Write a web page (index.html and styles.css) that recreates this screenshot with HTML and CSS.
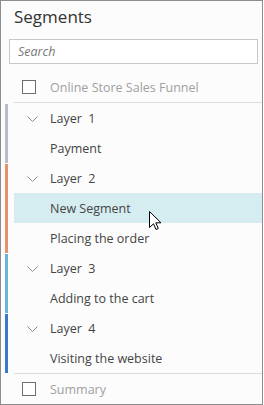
FILE: index.html
```html
<!DOCTYPE html>
<html lang="en">

<head>
    <meta charset="UTF-8">
    <meta name="viewport" content="width=device-width, initial-scale=1.0">
    <title>Segments</title>
    <link rel="stylesheet" href="styles.css">
</head>

<body>

    <div class="panel">
        <h1 class="title">Segments</h1>

        <div class="search">
            <input type="text" placeholder="Search">
        </div>

        <div class="row top-row">
            <span class="checkbox"></span>
            <span class="muted">Online Store Sales Funnel</span>
        </div>

        <div class="layer layer-1">
            <div class="row">
                <svg class="chevron" width="11" height="6" viewBox="0 0 11 6"><polyline points="0.5,0.5 5.5,5.5 10.5,0.5"/></svg>
                <span>Layer&nbsp; 1</span>
            </div>
            <div class="row item">Payment</div>
        </div>

        <div class="layer layer-2">
            <div class="row">
                <svg class="chevron" width="11" height="6" viewBox="0 0 11 6"><polyline points="0.5,0.5 5.5,5.5 10.5,0.5"/></svg>
                <span>Layer&nbsp; 2</span>
            </div>
            <div class="row item selected">
                New Segment
                <!-- mouse pointer over the hovered row -->
                <svg class="cursor" width="13" height="20" viewBox="0 0 13 20"><path d="M0.5,0.5 L0.5,16.5 L4.5,12.8 L7,18.5 L9.3,17.5 L6.8,11.8 L12,11.8 Z"/></svg>
            </div>
            <div class="row item">Placing the order</div>
        </div>

        <div class="layer layer-3">
            <div class="row">
                <svg class="chevron" width="11" height="6" viewBox="0 0 11 6"><polyline points="0.5,0.5 5.5,5.5 10.5,0.5"/></svg>
                <span>Layer&nbsp; 3</span>
            </div>
            <div class="row item">Adding to the cart</div>
        </div>

        <div class="layer layer-4">
            <div class="row">
                <svg class="chevron" width="11" height="6" viewBox="0 0 11 6"><polyline points="0.5,0.5 5.5,5.5 10.5,0.5"/></svg>
                <span>Layer&nbsp; 4</span>
            </div>
            <div class="row item">Visiting the website</div>
        </div>

        <div class="row bottom-row">
            <span class="checkbox"></span>
            <span class="muted">Summary</span>
        </div>
    </div>

</body>

</html>
```

FILE: styles.css
```css
body {
    margin: 0;
    padding: 0;
    font-family: 'Open Sans', 'Noto Sans', sans-serif;
    font-size: 12.5px;
    color: #444;
    background-color: #fff;
}

.panel {
    box-sizing: border-box;
    width: 263px;
    height: 405px;
    border: 1px solid #8c8c8c;
    background-color: #fcfcfc;
}

.title {
    margin: 0;
    padding: 4px 0 0 13px;
    height: 34px;
    font-size: 17px;
    font-weight: normal;
    color: #333;
}

.search {
    padding: 0 5px 0 8px;
}

.search input {
    box-sizing: border-box;
    width: 249px;
    height: 25px;
    margin: 0;
    padding: 0 8px;
    border: 1px solid #c8c8c8;
    background-color: #fff;
    font-family: inherit;
    font-size: 12.5px;
    outline: none;
}

.search input::placeholder {
    color: #777;
    font-style: italic;
}

.row {
    position: relative;
    display: flex;
    align-items: center;
    height: 30px;
}

.top-row {
    margin: 8px 0 0 13px;
    border-bottom: 1px solid #dcdcdc;
}

.bottom-row {
    margin-left: 13px;
    border-top: 1px solid #dcdcdc;
}

.checkbox {
    box-sizing: border-box;
    width: 14px;
    height: 14px;
    margin: 0 14px 0 8px;
    border: 1px solid #6e6e6e;
    background-color: #fff;
}

.muted {
    color: #a0a0a0;
}

.layer {
    margin-left: 4px;
    padding-left: 9px;
    background: linear-gradient(var(--bar), var(--bar)) no-repeat 0 1px / 3px calc(100% - 1px);
}

.layer-1 { --bar: #b8bdc6; }
.layer-2 { --bar: #e8906b; }
.layer-3 { --bar: #69b2d8; }
.layer-4 { --bar: #3c78c9; }

.chevron {
    margin: 1px 12px 0 13px;
    fill: none;
    stroke: #8a8a8a;
    stroke-width: 1;
}

.item {
    padding-left: 36px;
}

.selected {
    background-color: #d5edf1;
}

.cursor {
    position: absolute;
    left: 135px;
    top: 18px;
    fill: #fff;
    stroke: #000;
    stroke-width: 1;
}
```
